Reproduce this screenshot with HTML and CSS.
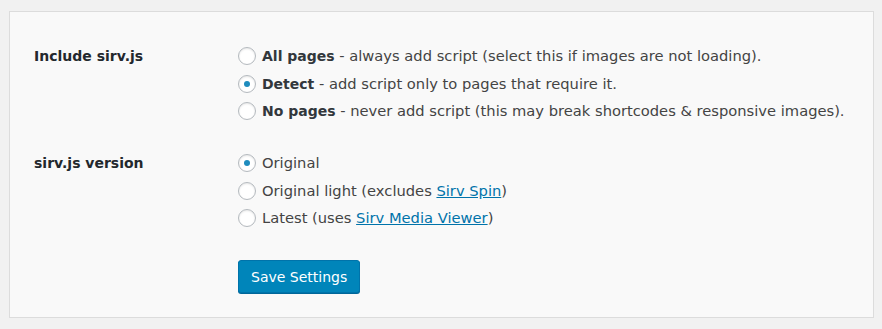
FILE: index.html
```html
<!DOCTYPE html>
<html lang="en">
<head>
  <meta charset="UTF-8" />
  <title>Sirv settings</title>
  <link rel="stylesheet" href="styles.css">
</head>
<body>

<div class="panel">
  <div class="row">
    <div class="label">Include sirv.js</div>
    <div class="options">
      <label class="opt"><span class="radio"></span><span><strong>All pages</strong> - always add script (select this if images are not loading).</span></label>
      <label class="opt"><span class="radio checked"></span><span><strong>Detect</strong> - add script only to pages that require it.</span></label>
      <label class="opt"><span class="radio"></span><span><strong>No pages</strong> - never add script (this may break shortcodes &amp; responsive images).</span></label>
    </div>
  </div>
  <div class="row">
    <div class="label">sirv.js version</div>
    <div class="options">
      <label class="opt"><span class="radio checked"></span><span>Original</span></label>
      <label class="opt"><span class="radio"></span><span>Original light (excludes <a href="#">Sirv Spin</a>)</span></label>
      <label class="opt"><span class="radio"></span><span>Latest (uses <a href="#">Sirv Media Viewer</a>)</span></label>
    </div>
  </div>
  <div class="actions">
    <button class="btn">Save Settings</button>
  </div>
</div>

</body>
</html>
```

FILE: styles.css
```css
body {
  margin: 0;
  padding: 11px 8px 11px 9px;
  background-color: #f1f1f1;
  font-family: 'DejaVu Sans', sans-serif;
  font-size: 14.7px;
  color: #444;
}
.panel {
  background-color: #f9f9f9;
  border: 1px solid #dcdcdc;
  padding: 34px 0 23px 24px;
  height: 248px;
}
.row {
  display: flex;
  margin-bottom: 32px;
}
.label {
  width: 204px;
  font-size: 14px;
  font-weight: bold;
  color: #23282d;
  line-height: 20px;
}
.options {
  display: flex;
  flex-direction: column;
  gap: 7.5px;
}
.opt {
  display: flex;
  align-items: center;
  gap: 6px;
  line-height: 20px;
}
.opt strong {
  font-size: 14px;
  color: #32373c;
}
.radio {
  width: 16px;
  height: 16px;
  border: 1px solid #b4b9be;
  border-radius: 50%;
  background-color: #fff;
  box-shadow: inset 0 1px 2px rgba(0, 0, 0, 0.1);
  display: flex;
  align-items: center;
  justify-content: center;
  flex-shrink: 0;
}
.radio.checked::before {
  content: "";
  width: 6px;
  height: 6px;
  border-radius: 50%;
  background-color: #1e8cbe;
}
a {
  color: #0073aa;
}
.actions {
  padding-left: 204px;
  margin-top: 31px;
}
.btn {
  background-color: #0085ba;
  border: 1px solid #0073aa;
  border-radius: 3px;
  box-shadow: 0 1px 0 #006799;
  color: #fff;
  font-family: inherit;
  font-size: 14px;
  height: 33px;
  padding: 0 12px;
  cursor: pointer;
}
```
